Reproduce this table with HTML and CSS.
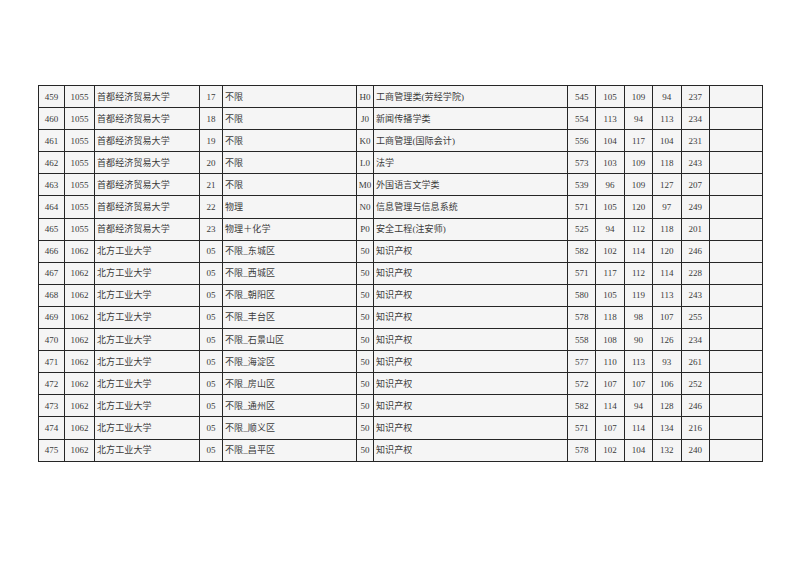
FILE: index.html
```html
<!DOCTYPE html>
<html lang="zh-CN">
<head>
<meta charset="utf-8">
<title>录取分数</title>
<link rel="stylesheet" href="styles.css">
</head>
<body>
<div class="page">
<table class="scores">
<colgroup>
<col class="c-no"><col class="c-code"><col class="c-school"><col class="c-grp"><col class="c-req"><col class="c-mcode"><col class="c-major"><col class="c-n"><col class="c-n"><col class="c-n"><col class="c-n"><col class="c-n"><col class="c-blank">
</colgroup>
<tbody>
<tr><td class="num">459</td><td class="num">1055</td><td class="txt">首都经济贸易大学</td><td class="num">17</td><td class="txt">不限</td><td class="num">H0</td><td class="txt">工商管理类(劳经学院)</td><td class="num">545</td><td class="num">105</td><td class="num">109</td><td class="num">94</td><td class="num">237</td><td></td></tr>
<tr><td class="num">460</td><td class="num">1055</td><td class="txt">首都经济贸易大学</td><td class="num">18</td><td class="txt">不限</td><td class="num">J0</td><td class="txt">新闻传播学类</td><td class="num">554</td><td class="num">113</td><td class="num">94</td><td class="num">113</td><td class="num">234</td><td></td></tr>
<tr><td class="num">461</td><td class="num">1055</td><td class="txt">首都经济贸易大学</td><td class="num">19</td><td class="txt">不限</td><td class="num">K0</td><td class="txt">工商管理(国际会计)</td><td class="num">556</td><td class="num">104</td><td class="num">117</td><td class="num">104</td><td class="num">231</td><td></td></tr>
<tr><td class="num">462</td><td class="num">1055</td><td class="txt">首都经济贸易大学</td><td class="num">20</td><td class="txt">不限</td><td class="num">L0</td><td class="txt">法学</td><td class="num">573</td><td class="num">103</td><td class="num">109</td><td class="num">118</td><td class="num">243</td><td></td></tr>
<tr><td class="num">463</td><td class="num">1055</td><td class="txt">首都经济贸易大学</td><td class="num">21</td><td class="txt">不限</td><td class="num">M0</td><td class="txt">外国语言文学类</td><td class="num">539</td><td class="num">96</td><td class="num">109</td><td class="num">127</td><td class="num">207</td><td></td></tr>
<tr><td class="num">464</td><td class="num">1055</td><td class="txt">首都经济贸易大学</td><td class="num">22</td><td class="txt">物理</td><td class="num">N0</td><td class="txt">信息管理与信息系统</td><td class="num">571</td><td class="num">105</td><td class="num">120</td><td class="num">97</td><td class="num">249</td><td></td></tr>
<tr><td class="num">465</td><td class="num">1055</td><td class="txt">首都经济贸易大学</td><td class="num">23</td><td class="txt">物理＋化学</td><td class="num">P0</td><td class="txt">安全工程(注安师)</td><td class="num">525</td><td class="num">94</td><td class="num">112</td><td class="num">118</td><td class="num">201</td><td></td></tr>
<tr><td class="num">466</td><td class="num">1062</td><td class="txt">北方工业大学</td><td class="num">05</td><td class="txt">不限_东城区</td><td class="num">50</td><td class="txt">知识产权</td><td class="num">582</td><td class="num">102</td><td class="num">114</td><td class="num">120</td><td class="num">246</td><td></td></tr>
<tr><td class="num">467</td><td class="num">1062</td><td class="txt">北方工业大学</td><td class="num">05</td><td class="txt">不限_西城区</td><td class="num">50</td><td class="txt">知识产权</td><td class="num">571</td><td class="num">117</td><td class="num">112</td><td class="num">114</td><td class="num">228</td><td></td></tr>
<tr><td class="num">468</td><td class="num">1062</td><td class="txt">北方工业大学</td><td class="num">05</td><td class="txt">不限_朝阳区</td><td class="num">50</td><td class="txt">知识产权</td><td class="num">580</td><td class="num">105</td><td class="num">119</td><td class="num">113</td><td class="num">243</td><td></td></tr>
<tr><td class="num">469</td><td class="num">1062</td><td class="txt">北方工业大学</td><td class="num">05</td><td class="txt">不限_丰台区</td><td class="num">50</td><td class="txt">知识产权</td><td class="num">578</td><td class="num">118</td><td class="num">98</td><td class="num">107</td><td class="num">255</td><td></td></tr>
<tr><td class="num">470</td><td class="num">1062</td><td class="txt">北方工业大学</td><td class="num">05</td><td class="txt">不限_石景山区</td><td class="num">50</td><td class="txt">知识产权</td><td class="num">558</td><td class="num">108</td><td class="num">90</td><td class="num">126</td><td class="num">234</td><td></td></tr>
<tr><td class="num">471</td><td class="num">1062</td><td class="txt">北方工业大学</td><td class="num">05</td><td class="txt">不限_海淀区</td><td class="num">50</td><td class="txt">知识产权</td><td class="num">577</td><td class="num">110</td><td class="num">113</td><td class="num">93</td><td class="num">261</td><td></td></tr>
<tr><td class="num">472</td><td class="num">1062</td><td class="txt">北方工业大学</td><td class="num">05</td><td class="txt">不限_房山区</td><td class="num">50</td><td class="txt">知识产权</td><td class="num">572</td><td class="num">107</td><td class="num">107</td><td class="num">106</td><td class="num">252</td><td></td></tr>
<tr><td class="num">473</td><td class="num">1062</td><td class="txt">北方工业大学</td><td class="num">05</td><td class="txt">不限_通州区</td><td class="num">50</td><td class="txt">知识产权</td><td class="num">582</td><td class="num">114</td><td class="num">94</td><td class="num">128</td><td class="num">246</td><td></td></tr>
<tr><td class="num">474</td><td class="num">1062</td><td class="txt">北方工业大学</td><td class="num">05</td><td class="txt">不限_顺义区</td><td class="num">50</td><td class="txt">知识产权</td><td class="num">571</td><td class="num">107</td><td class="num">114</td><td class="num">134</td><td class="num">216</td><td></td></tr>
<tr><td class="num">475</td><td class="num">1062</td><td class="txt">北方工业大学</td><td class="num">05</td><td class="txt">不限_昌平区</td><td class="num">50</td><td class="txt">知识产权</td><td class="num">578</td><td class="num">102</td><td class="num">104</td><td class="num">132</td><td class="num">240</td><td></td></tr>
</tbody>
</table>
</div>
</body>
</html>
```
FILE: styles.css
```css
html, body {
  margin: 0;
  padding: 0;
  background: #ffffff;
}
.page {
  padding: 85px 0 0 38px;
}
.scores {
  border-collapse: collapse;
  table-layout: fixed;
  width: 724px;
  font-family: "Liberation Serif", "Noto Sans CJK SC", serif;
  font-size: 9px;
  color: #3a3a3a;
  background: #f5f5f5;
}
.scores td {
  border: 1px solid #262626;
  height: 21.1px;
  padding: 0;
  line-height: 12px;
  white-space: nowrap;
  overflow: hidden;
}
.scores td.num {
  text-align: center;
}
.scores td.txt {
  text-align: left;
  padding-left: 2px;
  letter-spacing: 0.1px;
}
.c-no { width: 26px; }
.c-code { width: 30px; }
.c-school { width: 105px; }
.c-grp { width: 23px; }
.c-req { width: 134px; }
.c-mcode { width: 17px; }
.c-major { width: 194px; }
.c-n { width: 28.4px; }
.c-blank { width: 53px; }
```
